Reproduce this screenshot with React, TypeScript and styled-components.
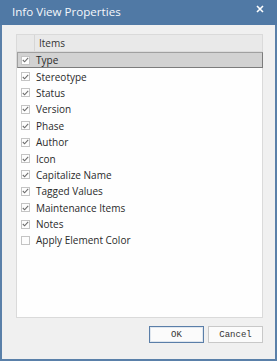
import styled, { createGlobalStyle } from "styled-components";

const GlobalStyle = createGlobalStyle`
    html, body {
        margin: 0;
        padding: 0;
        background: #ffffff;
    }
    * {
        box-sizing: border-box;
    }
`;

const Window = styled.div`
    width: 277px;
    height: 361px;
    display: flex;
    flex-direction: column;
    background-color: #f0f0f0;
    border: 2px solid #5a80a9;
    border-top: none;
    font-family: "Open Sans", "Noto Sans", sans-serif;
`;

const TitleBar = styled.div`
    height: 25px;
    margin: 0 -2px;
    flex-shrink: 0;
    background-color: #5079a5;
    color: #f4f7fb;
    display: flex;
    align-items: center;
    justify-content: space-between;
    padding: 0 11px 2px 12px;
    font-size: 11.6px;
`;

const CloseButton = styled.div`
    width: 12px;
    height: 12px;
    display: flex;
    align-items: center;
    justify-content: center;
    margin-top: -6px;
`;

const Body = styled.div`
    flex: 1;
    display: flex;
    flex-direction: column;
    padding: 9px 12px 0 14px;
`;

const ListBox = styled.div`
    height: 284px;
    background-color: #fefefe;
    border: 1px solid #dadada;
    display: flex;
    flex-direction: column;
`;

const HeaderRow = styled.div`
    height: 17px;
    display: flex;
    background-color: #e9e9e9;
    border-bottom: 1px solid #dcdcdc;
    font-size: 10px;
    color: #333;
`;

const CheckCell = styled.div`
    width: 17px;
    flex-shrink: 0;
`;

const HeaderLabel = styled.div`
    flex: 1;
    display: flex;
    align-items: center;
    padding-left: 4px;
    border-left: 1px solid #d6d6d6;
`;

const Row = styled.div<{ $selected?: boolean }>`
    height: 16.4px;
    display: flex;
    align-items: center;
    font-size: 10px;
    color: #2a2a2a;
    background-color: ${(p) => (p.$selected ? "#d2d2d2" : "transparent")};
    border: 1px solid ${(p) => (p.$selected ? "#a0a0a0" : "transparent")};
    border-bottom-color: ${(p) => (p.$selected ? "#7c7c7c" : "transparent")};
    border-right-color: ${(p) => (p.$selected ? "#7c7c7c" : "transparent")};
    margin-right: -1px;
`;

const Box = styled.div`
    width: 9px;
    height: 9px;
    margin-left: 3px;
    border: 1px solid #c4c4c4;
    background-color: #fdfdfd;
    display: flex;
    align-items: center;
    justify-content: center;
`;

const RowLabel = styled.span`
    margin-left: 6px;
    white-space: nowrap;
`;

const ButtonBar = styled.div`
    display: flex;
    justify-content: flex-end;
    gap: 4px;
    margin-top: 8px;
`;

const Button = styled.button<{ $default?: boolean }>`
    width: 55px;
    height: 17px;
    padding: 0;
    font-family: "Liberation Mono", "DejaVu Sans Mono", monospace;
    font-size: 9px;
    color: #333;
    background-color: #fbfbfb;
    border: 1px solid ${(p) => (p.$default ? "#5a7ea8" : "#c8c8c8")};
    box-shadow: ${(p) => (p.$default ? "inset 0 0 0 1px #dfe6ee" : "none")};
`;

const items: { label: string; checked: boolean }[] = [
    { label: "Type", checked: true },
    { label: "Stereotype", checked: true },
    { label: "Status", checked: true },
    { label: "Version", checked: true },
    { label: "Phase", checked: true },
    { label: "Author", checked: true },
    { label: "Icon", checked: true },
    { label: "Capitalize Name", checked: true },
    { label: "Tagged Values", checked: true },
    { label: "Maintenance Items", checked: true },
    { label: "Notes", checked: true },
    { label: "Apply Element Color", checked: false },
];

const Check = () => (
    <svg width="7" height="6" viewBox="0 0 7 6">
        <path d="M0.8 3 L2.6 4.8 L6.2 0.8" fill="none" stroke="#6d6d6d" strokeWidth="1.1" />
    </svg>
);

const App = () => {
    return (
        <>
            <GlobalStyle />
            <Window>
                <TitleBar>
                    <span>Info View Properties</span>
                    <CloseButton>
                        <svg width="8" height="8" viewBox="0 0 8 8">
                            <path d="M1 1 L7 7 M7 1 L1 7" stroke="#ffffff" strokeWidth="1.6" />
                        </svg>
                    </CloseButton>
                </TitleBar>
                <Body>
                    <ListBox>
                        <HeaderRow>
                            <CheckCell />
                            <HeaderLabel>Items</HeaderLabel>
                        </HeaderRow>
                        {items.map((item, i) => (
                            <Row key={item.label} $selected={i === 0}>
                                <Box>{item.checked && <Check />}</Box>
                                <RowLabel>{item.label}</RowLabel>
                            </Row>
                        ))}
                    </ListBox>
                    <ButtonBar>
                        <Button $default>OK</Button>
                        <Button>Cancel</Button>
                    </ButtonBar>
                </Body>
            </Window>
        </>
    );
};

export default App;
